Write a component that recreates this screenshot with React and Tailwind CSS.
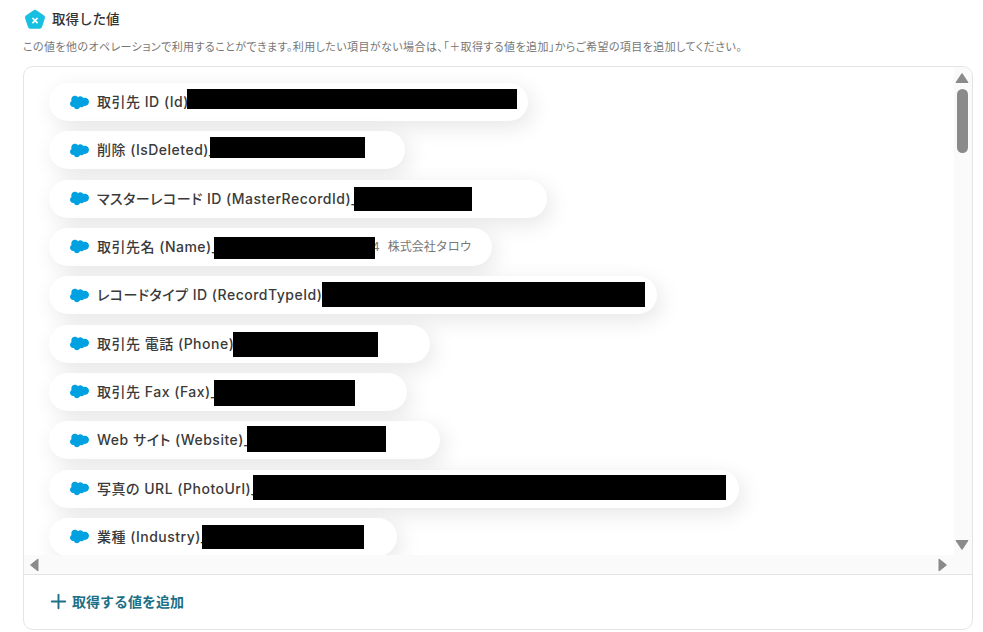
import { Plus } from "lucide-react";
import { SiSalesforce } from "react-icons/si";

const rows = [
  { label: "取引先 ID (Id)", pill: "w-[479px]", text: "w-[90px]", block: "w-[330px] h-[20px] mb-[6px]" },
  { label: "削除 (IsDeleted)_", pill: "w-[356px]", text: "w-[113px]", block: "w-[155px] h-[21px] mb-[5px]" },
  { label: "マスターレコード ID (MasterRecordId)_", pill: "w-[498px]", text: "w-[257px]", block: "w-[118px] h-[24px]" },
  { label: "取引先名 (Name)_", pill: "w-[443px]", text: "w-[117px]", block: "w-[161px] h-[22px] mt-[2px]", value: "株式会社タロウ" },
  { label: "レコードタイプ ID (RecordTypeId)_", pill: "w-[608px]", text: "w-[225px]", block: "w-[323px] h-[25px] mb-[2px]" },
  { label: "取引先 電話 (Phone)", pill: "w-[381px]", text: "w-[136px]", block: "w-[145px] h-[25px] mt-[2px]" },
  { label: "取引先 Fax (Fax)_", pill: "w-[358px]", text: "w-[117px]", block: "w-[141px] h-[26px] mt-[3px]" },
  { label: "Web サイト (Website)_", pill: "w-[391px]", text: "w-[150px]", block: "w-[139px] h-[26px] mb-[3px]" },
  { label: "写真の URL (PhotoUrl)_", pill: "w-[690px]", text: "w-[156px]", block: "w-[473px] h-[25px] mb-[3px]" },
  { label: "業種 (Industry)_", pill: "w-[348px]", text: "w-[105px]", block: "w-[162px] h-[24px]" },
];

function Logo() {
  return (
    <svg width="22" height="21" viewBox="0 0 22 21">
      <path
        d="M9.6 1.2a2.4 2.4 0 0 1 2.8 0l7.6 5.4a2.4 2.4 0 0 1 .9 2.7l-2.9 8.8a2.4 2.4 0 0 1-2.3 1.7H6.3A2.4 2.4 0 0 1 4 18.1L1.1 9.3A2.4 2.4 0 0 1 2 6.6z"
        fill="#17bfe0"
      />
      <path d="M8.4 9l5.2 5.2M13.6 9l-5.2 5.2" stroke="#fff" strokeWidth="1.7" />
    </svg>
  );
}

function Arrow({ points }) {
  return (
    <svg width="14" height="14" viewBox="0 0 14 14" className="shrink-0">
      <polygon points={points} fill="#8a8a8a" stroke="#8a8a8a" strokeWidth="1" strokeLinejoin="round" />
    </svg>
  );
}

function Row({ row }) {
  return (
    <div className={`flex items-center h-[38px] shrink-0 rounded-full bg-white pl-[21px] shadow-[4px_6px_22px_rgba(0,0,0,0.1)] ${row.pill}`}>
      <SiSalesforce className="text-[#00a1e0] w-[19px] h-[19px] shrink-0" />
      <span className={`ml-[8px] mb-[1px] shrink-0 text-[14px] font-medium tracking-[0.5px] text-[#3a3a3a] whitespace-pre [font-feature-settings:'palt'] ${row.text}`}>{row.label}</span>
      <span className={`relative z-10 bg-black shrink-0 ${row.block}`}></span>
      {row.value && (
        <>
          <span className="ml-[-3px] text-[12px] text-[#777]">4</span>
          <span className="ml-[8px] text-[12px] text-[#777] whitespace-pre">{row.value}</span>
        </>
      )}
    </div>
  );
}

export default function App() {
  return (
    <div className="w-[983px] h-[632px] bg-white overflow-hidden pl-[23px] pr-[10px] pt-[8px] font-['Inter','Noto_Sans_CJK_JP',sans-serif]">
      {/* Header */}
      <div className="flex items-center gap-[6px] ml-[1px] h-[22px]">
        <Logo />
        <h2 className="text-[13.5px] font-medium text-[#333]">取得した値</h2>
      </div>
      <p className="mt-[10px] text-[11px] leading-[14px] tracking-[0.42px] text-[#777] whitespace-nowrap [font-feature-settings:'palt']">
        この値を他のオペレーションで利用することができます。利用したい項目がない場合は、「＋取得する値を追加」からご希望の項目を追加してください。
      </p>

      {/* Card */}
      <div className="mt-[12px] h-[564px] rounded-[10px] border border-[#e4e4e4] bg-white flex flex-col overflow-hidden">
        <div className="flex h-[508px] shrink-0 border-b border-[#e4e4e4]">
          <div className="flex-1 flex flex-col min-w-0">
            <div className="h-[488px] overflow-hidden flex flex-col gap-[10.33px] pl-[25px] pt-[16px]">
              {rows.map((row) => (
                <Row key={row.label} row={row} />
              ))}
            </div>
            <div className="flex-1 bg-[#fafafa] flex items-center justify-between pl-[3px] pr-[4px]">
              <Arrow points="11,1 11,13 3.5,7" />
              <Arrow points="3,1 3,13 10.5,7" />
            </div>
          </div>
          {/* Scrollbar */}
          <div className="w-[18px] bg-[#fafafa] flex flex-col items-center pt-[4px] pb-[22px] pr-[2px]">
            <Arrow points="7,2.5 1,11.5 13,11.5" />
            <div className="w-[11px] h-[64px] mt-[4px] rounded-full bg-[#8a8a8a]"></div>
            <div className="flex-1"></div>
            <Arrow points="1,2.5 13,2.5 7,11.5" />
          </div>
        </div>

        {/* Footer */}
        <button className="flex items-center gap-[2px] pl-[23px] pb-[2px] h-[54px] text-[#1d6f86] text-[14px] font-semibold">
          <Plus className="w-[23px] h-[23px]" strokeWidth={2} />
          取得する値を追加
        </button>
      </div>
    </div>
  );
}
